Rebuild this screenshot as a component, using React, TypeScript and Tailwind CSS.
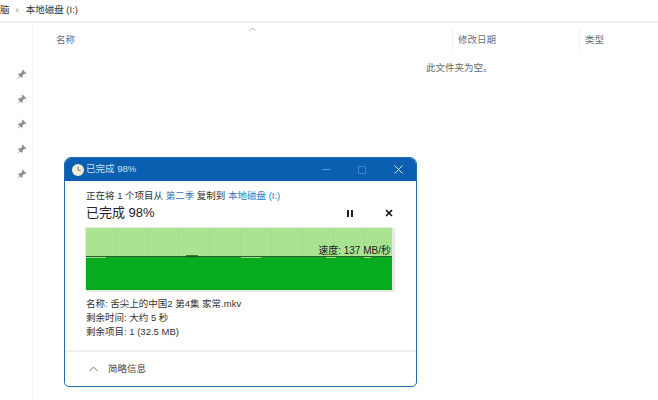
const pinRows = [0, 1, 2, 3, 4];

function Pin() {
  return (
    <svg width="10" height="10" viewBox="0 0 10 10" className="text-[#8a8d92]">
      <path d="M5.6 0.8 L9.2 4.4 L8.2 5 L7.2 4.6 L5.4 6.4 L5.4 8 L4.6 8.6 L1.4 5.4 L2 4.6 L3.6 4.6 L5.4 2.8 L5 1.8 Z M2.8 7 L0.8 9.2 L3 7.2 Z" fill="currentColor" stroke="currentColor" strokeWidth="0.4" />
    </svg>
  );
}

function SpeedChart() {
  const gridX = [30, 61, 92, 123, 154, 185, 216, 247, 278];
  return (
    <div className="relative w-[306px] h-[62px] mt-[5px] shadow-[0_0_0_1px_#e4efe0,2px_1px_0_1px_#e8e8e8]">
      <svg width="306" height="62" viewBox="0 0 306 62" className="block">
        <rect width="306" height="29" fill="#a9e590" />
        {gridX.map((x) => (
          <line key={x} x1={x + 0.5} y1="0" x2={x + 0.5} y2="29" stroke="#a1de88" />
        ))}
        <line x1="0" y1="14.5" x2="306" y2="14.5" stroke="#a4e08b" />
        <rect y="29" width="306" height="33" fill="#06ab20" />
        <path d="M0 28.5 H306" stroke="#2f5c2b" strokeWidth="1" />
        <path d="M0 29.5 H20 M155 29.5 H175 M240 29.5 H250 M278 29.5 H285" stroke="#9fdc8f" strokeWidth="1" />
        <path d="M100 28 H112" stroke="#1d4a1c" strokeWidth="1.5" />
      </svg>
      <span className="absolute right-[1px] top-[16px] text-[10px] leading-[13px] text-[#222]">速度: 137 MB/秒</span>
    </div>
  );
}

function CopyDialog() {
  return (
    <div className="absolute left-[64px] top-[157px] w-[353px] h-[230px] flex flex-col rounded-t-[7px] rounded-b-[5px] border border-[#1f6cb3] bg-white overflow-hidden">
      <div className="h-[23px] shrink-0 flex items-center bg-[#0a5fb0] pl-[7px] text-white">
        <svg width="12" height="12" viewBox="0 0 12 12">
          <circle cx="6" cy="6" r="6" fill="#f3ead9" />
          <path d="M6 2.6 V6.3 H8.8" fill="none" stroke="#6b7f95" strokeWidth="1" />
        </svg>
        <span className="ml-[2px] text-[9.5px] text-[#cfe2f5]">已完成 98%</span>
        <div className="ml-auto flex items-center">
          <span className="w-[36px] flex justify-center"><span className="block w-[8px] h-px bg-[#5e9ad3]" /></span>
          <span className="w-[36px] flex justify-center"><span className="block w-[8px] h-[8px] border border-[#3f83c4]" /></span>
          <span className="w-[36px] flex justify-center">
            <svg width="9" height="9" viewBox="0 0 9 9"><path d="M0.5 0.5 L8.5 8.5 M8.5 0.5 L0.5 8.5" stroke="#d5e6f6" strokeWidth="1" /></svg>
          </span>
        </div>
      </div>
      <div className="flex-1 flex flex-col pl-[21px] pt-[8px]">
        <div className="text-[9.5px] leading-[14px] text-[#333]">
          正在将 1 个项目从 <span className="text-[#2f78c2]">第二季</span> 复制到 <span className="text-[#2f78c2]">本地磁盘 (I:)</span>
        </div>
        <div className="flex items-center h-[20px]">
          <span className="w-[66px] whitespace-nowrap text-[13px] leading-[20px] text-[#222]">已完成 98%</span>
          <div className="ml-[195px] flex items-center gap-[32px]">
            <span className="flex gap-[2px]"><i className="block w-[2px] h-[7px] bg-[#222]" /><i className="block w-[2px] h-[7px] bg-[#222]" /></span>
            <svg width="8" height="8" viewBox="0 0 8 8"><path d="M1 1 L7 7 M7 1 L1 7" stroke="#111" strokeWidth="1.6" /></svg>
          </div>
        </div>
        <SpeedChart />
        <div className="mt-[7px] text-[9.5px] leading-[14px] text-[#333]">
          <div>名称: 舌尖上的中国2 第4集 家常.mkv</div>
          <div>剩余时间: 大约 5 秒</div>
          <div>剩余项目: 1 (32.5 MB)</div>
        </div>
      </div>
      <div className="h-[36px] shrink-0 flex items-center border-t-2 border-[#f0f0f0] pl-[24px] text-[9.5px] text-[#444]">
        <svg width="9" height="6" viewBox="0 0 9 6"><path d="M0.5 5 L4.5 1 L8.5 5" fill="none" stroke="#777" strokeWidth="1" /></svg>
        <span className="ml-[10px]">简略信息</span>
      </div>
    </div>
  );
}

export default function App() {
  return (
    <div className="relative w-[658px] h-[400px] overflow-hidden bg-white font-['Liberation_Sans','Noto_Sans_CJK_SC',sans-serif]">
      <div className="h-[23px] flex items-center border-b-2 border-[#f0f0f0] text-[9.5px] text-[#333]">
        <span>脑</span>
        <span className="ml-[6px] mr-[7px] text-[#777]">›</span>
        <span>本地磁盘 (I:)</span>
      </div>
      <div className="flex h-[377px]">
        <div className="w-[33px] shrink-0 border-r border-[#f7f7f7] flex flex-col items-center pl-[11px] pt-[46px] gap-[15px]">
          {pinRows.map((r) => <Pin key={r} />)}
        </div>
        <div className="flex-1 flex flex-col">
          <div className="relative flex h-[25px] mt-[5px] text-[9.5px] text-[#5f6f80]">
            <span className="absolute left-[216px] top-[-1px]">
              <svg width="7" height="5" viewBox="0 0 7 5"><path d="M0.5 4 L3.5 1 L6.5 4" fill="none" stroke="#999" strokeWidth="0.8" /></svg>
            </span>
            <div className="w-[419px] pl-[23px] flex items-center">名称</div>
            <div className="w-[127px] pl-[5px] flex items-center border-l border-[#f2f2f2]">修改日期</div>
            <div className="flex-1 pl-[5px] flex items-center border-l border-[#f2f2f2]">类型</div>
          </div>
          <div className="mt-[8px] pl-[393px] text-[9.5px] leading-[14px] text-[#666]">此文件夹为空。</div>
        </div>
      </div>
      <CopyDialog />
    </div>
  );
}
